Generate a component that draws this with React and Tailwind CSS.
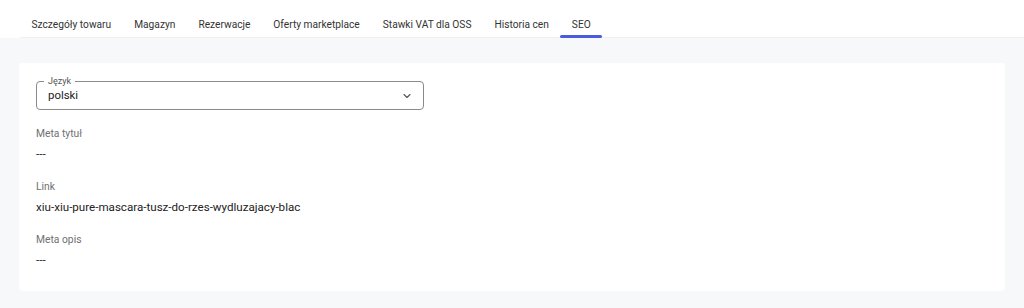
import React from 'react'

const tabs = [
  'Szczegóły towaru',
  'Magazyn',
  'Rezerwacje',
  'Oferty marketplace',
  'Stawki VAT dla OSS',
  'Historia cen',
  'SEO',
]

function Field({ label, value }) {
  return (
    <div className="mt-[17px]">
      <div className="text-[10.3px] leading-[14px] text-[#707070]">{label}</div>
      <div className="mt-[4px] text-[11.6px] leading-[18px] text-[#222]">{value}</div>
    </div>
  )
}

export default function App() {
  return (
    <div className="min-h-screen bg-[#f7f8fa] font-['Roboto',sans-serif]">
      {/* Tab bar */}
      <div className="bg-white pl-[20px]">
        <div className="flex h-[38px] border-b border-[#eef0f3]">
          {tabs.map((t) => {
            const active = t === 'SEO'
            return (
              <div key={t} className="relative px-[11.5px] pt-[18px] text-[10.2px] leading-[14px] text-[#333]">
                {t}
                {active && (
                  <div className="absolute bottom-[-1px] left-0 right-0 h-[3px] rounded-full bg-[#4a5be0]" />
                )}
              </div>
            )
          })}
        </div>
      </div>

      {/* Content card */}
      <div className="px-[19px] pt-[25px] pb-[19px]">
        <div className="rounded-[4px] bg-white px-[17px] pt-[18px] pb-[22px]">
          <div className="relative w-[388px] h-[29px] rounded-[4px] border border-[#8a8a8a] flex items-center justify-between pl-[11px] pr-[10px]">
            <span className="absolute -top-[7px] left-[7px] bg-white px-[4px] text-[9px] leading-[12px] text-[#555]">Język</span>
            <span className="text-[11.4px] text-[#222]">polski</span>
            <svg width="12" height="12" viewBox="0 0 24 24" fill="none" stroke="#555" strokeWidth="2.2" strokeLinecap="round" strokeLinejoin="round">
              <path d="M6 9l6 6 6-6" />
            </svg>
          </div>
          <Field label="Meta tytuł" value="---" />
          <Field label="Link" value="xiu-xiu-pure-mascara-tusz-do-rzes-wydluzajacy-blac" />
          <Field label="Meta opis" value="---" />
        </div>
      </div>
    </div>
  )
}
